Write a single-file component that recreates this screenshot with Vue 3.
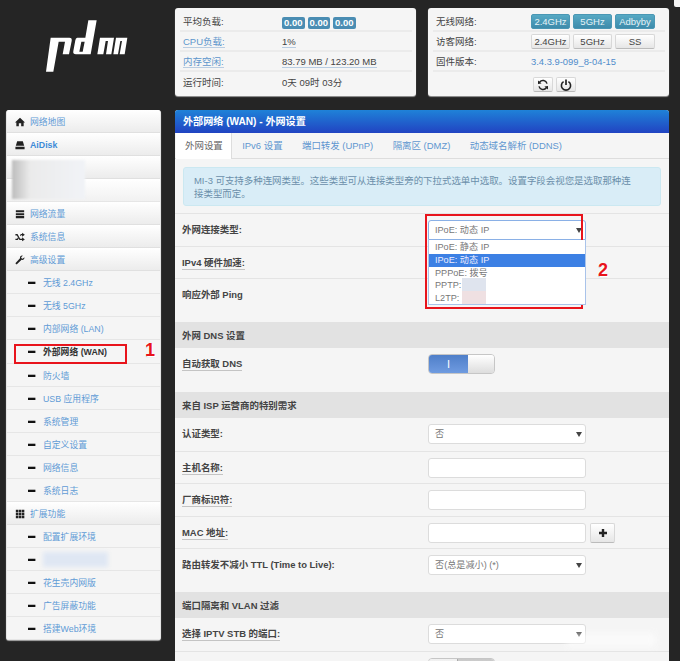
<script setup>
const nav = [
  { t: '网络地图', icon: 'home', top: true },
  { t: 'AiDisk', icon: 'hdd', top: true, bold: true },
  { t: '', top: true, empty: true },
  { t: '', plain: true, empty: true },
  { t: '网络流量', icon: 'tasks', top: true },
  { t: '系统信息', icon: 'random', top: true },
  { t: '高级设置', icon: 'wrench', top: true },
  { t: '无线 2.4GHz' },
  { t: '无线 5GHz' },
  { t: '内部网络 (LAN)' },
  { t: '外部网络 (WAN)', active: true },
  { t: '防火墙' },
  { t: 'USB 应用程序' },
  { t: '系统管理' },
  { t: '自定义设置' },
  { t: '网络信息' },
  { t: '系统日志' },
  { t: '扩展功能', icon: 'th', top: true },
  { t: '配置扩展环境' },
  { t: '', blur: true },
  { t: '花生壳内网版' },
  { t: '广告屏蔽功能' },
  { t: '搭建Web环境' }
]
const tabs = ['外网设置', 'IPv6 设置', '端口转发 (UPnP)', '隔离区 (DMZ)', '动态域名解析 (DDNS)']
const icons = {
  home: 'M6 1 L12 6.5 L10.4 6.5 L10.4 11 L7.4 11 L7.4 7.6 L4.6 7.6 L4.6 11 L1.6 11 L1.6 6.5 L0 6.5 Z',
  hdd: 'M2.6 1.5 H9.4 L11 7 H1 Z M0.5 8 H11.5 V11.2 H0.5 Z',
  tasks: 'M1 1.5 H11 V4 H1 Z M1 5 H11 V7.5 H1 Z M1 8.5 H11 V11 H1 Z',
  random: 'M0.5 2.5 H3 L6.2 8 H8.5 V6.4 L11.8 8.9 L8.5 11.2 V9.6 H5.4 L2.2 4.1 H0.5 Z M0.5 8 H2.5 L3.4 6.5 L4.3 8 L3.3 9.6 H0.5 Z M6 3.8 L7 2.5 H8.5 V0.8 L11.8 3.3 L8.5 5.6 V4 H7.3 L6.7 5 Z',
  wrench: 'M11.2 2.6 L9.3 4.4 L7.8 4 L7.4 2.6 L9.3 0.8 C7.6 0.2 5.6 1.5 6 3.9 L1 9.2 C0 10.2 1.6 11.8 2.6 10.8 L7.9 5.8 C10.2 6.4 11.8 4.4 11.2 2.6 Z',
  th: 'M1 1 H4 V4 H1 Z M4.6 1 H7.6 V4 H4.6 Z M8.2 1 H11.2 V4 H8.2 Z M1 4.6 H4 V7.6 H1 Z M4.6 4.6 H7.6 V7.6 H4.6 Z M8.2 4.6 H11.2 V7.6 H8.2 Z M1 8.2 H4 V11.2 H1 Z M4.6 8.2 H7.6 V11.2 H4.6 Z M8.2 8.2 H11.2 V11.2 H8.2 Z',
  minus: 'M0 4.7 H7.4 V7 H0 Z'
}
</script>

<template>
  <div class="page">
    <aside class="left">
      <div class="logo-box">
        <svg class="logo" width="95" height="62" viewBox="0 0 285 186" aria-label="logo">
          <path fill="#fff" d="M32 68 H88 Q97 68 95 78 L87 118 H68 L75 80 H56 L40 170 H18 Z" />
          <path fill="#fff" fill-rule="evenodd" d="M108 68 H136 L145 16 H170 L152 118 H108 Q98 118 100 108 L106 76 Q107 68 112 68 Z M124 80 L118 110 H128 L134 80 Z" />
          <path fill="#fff" d="M180 68 H222 L214 118 H198 L204 78 H197 L190 118 H172 Z" />
          <path fill="#fff" d="M228 68 H262 L254 118 H239 L246 78 H241 L234 118 H220 Z" />
        </svg>
      </div>
      <nav class="side">
        <div
          v-for="(n, i) in nav"
          :key="i"
          class="nav-row"
          :class="{ top: n.top, active: n.active, bold: n.bold, plain: n.plain }"
        >
          <svg v-if="n.icon" class="ic" width="10" height="10" viewBox="0 0 12 12"><path :d="icons[n.icon]" fill="#222" /></svg>
          <svg v-else-if="!n.top && !n.plain" class="dash" width="8" height="12" viewBox="0 0 8 12"><path :d="icons.minus" fill="#111" /></svg>
          <span v-if="n.blur" class="blur-text"></span>
          <span v-else class="nav-text">{{ n.t }}</span>
        </div>
        <div class="blur-box"></div>
      </nav>
    </aside>

    <main class="right">
      <div class="status">
        <section class="card">
          <div class="s-row">
            <span class="k">平均负载:</span>
            <span class="v badges"><b>0.00</b><b>0.00</b><b>0.00</b></span>
          </div>
          <div class="s-row">
            <span class="k link"><u>CPU负载:</u></span>
            <span class="v"><u>1%</u></span>
          </div>
          <div class="s-row">
            <span class="k link"><u>内存空闲:</u></span>
            <span class="v"><u>83.79 MB / 123.20 MB</u></span>
          </div>
          <div class="s-row">
            <span class="k">运行时间:</span>
            <span class="v">0天 09时 03分</span>
          </div>
        </section>
        <section class="card card-r">
          <div class="s-row">
            <span class="k">无线网络:</span>
            <span class="btns"><button class="on">2.4GHz</button><button class="on">5GHz</button><button class="on wide">Adbyby</button></span>
          </div>
          <div class="s-row">
            <span class="k">访客网络:</span>
            <span class="btns"><button>2.4GHz</button><button>5GHz</button><button class="wide">SS</button></span>
          </div>
          <div class="s-row">
            <span class="k">固件版本:</span>
            <span class="fw">3.4.3.9-099_8-04-15</span>
          </div>
          <div class="s-row no-line">
            <span class="k"></span>
            <span class="icons">
              <button class="ib" aria-label="刷新">
                <svg width="12" height="12" viewBox="0 0 12 12"><path d="M10 4.6 A4.2 4.2 0 0 0 2.6 3.2 M2 7.4 A4.2 4.2 0 0 0 9.4 8.8" fill="none" stroke="#222" stroke-width="1.5" /><path d="M1 1.6 L4.6 4.6 L1 5 Z M11 10.4 L7.4 7.4 L11 7 Z" fill="#222" /></svg>
              </button>
              <button class="ib" aria-label="电源">
                <svg width="12" height="12" viewBox="0 0 12 12"><path d="M3.6 2.6 A4.6 4.6 0 1 0 8.4 2.6" fill="none" stroke="#222" stroke-width="1.6" /><path d="M6 0.5 V6" stroke="#222" stroke-width="1.7" /></svg>
              </button>
            </span>
          </div>
        </section>
      </div>

      <section class="panel">
        <header class="head">外部网络 (WAN) - 外网设置</header>
        <div class="tabs">
          <span v-for="(t, i) in tabs" :key="t" class="tab" :class="{ current: i === 0 }">{{ t }}</span>
        </div>
        <div class="alert">MI-3 可支持多种连网类型。这些类型可从连接类型旁的下拉式选单中选取。设置字段会视您是选取那种连接类型而定。</div>

        <div class="form">
          <div class="row first">
            <label>外网连接类型:</label>
            <div class="ctl">
              <div class="sel focus">IPoE: 动态 IP<i></i></div>
              <ul class="drop">
                <li>IPoE: 静态 IP</li>
                <li class="hl">IPoE: 动态 IP</li>
                <li>PPPoE: 拨号</li>
                <li>PPTP:<span class="smudge"></span></li>
                <li>L2TP:<span class="smudge pink"></span></li>
              </ul>
            </div>
          </div>
          <div class="row"><label><span class="dotted">IPv4 硬件加速:</span></label></div>
          <div class="row tall"><label>响应外部 Ping</label></div>
          <div class="sec">外网 DNS 设置</div>
          <div class="row tall">
            <label><span class="dotted">自动获取 DNS</span></label>
            <div class="ctl"><div class="toggle"><span class="t-on">I</span><span class="t-off"></span></div></div>
          </div>
          <div class="sec">来自 ISP 运营商的特别需求</div>
          <div class="row">
            <label>认证类型:</label>
            <div class="ctl"><div class="sel">否<i></i></div></div>
          </div>
          <div class="row">
            <label><span class="dotted">主机名称:</span></label>
            <div class="ctl"><div class="inp"></div></div>
          </div>
          <div class="row">
            <label><span class="dotted">厂商标识符:</span></label>
            <div class="ctl"><div class="inp"></div></div>
          </div>
          <div class="row">
            <label><span class="dotted">MAC 地址:</span></label>
            <div class="ctl mac">
              <div class="inp"></div>
              <button class="ib plus" aria-label="添加">
                <svg width="10" height="10" viewBox="0 0 10 10"><path d="M3.8 1 H6.2 V3.8 H9 V6.2 H6.2 V9 H3.8 V6.2 H1 V3.8 H3.8 Z" fill="#222" /></svg>
              </button>
            </div>
          </div>
          <div class="row tall">
            <label>路由转发不减小 TTL (Time to Live):</label>
            <div class="ctl"><div class="sel">否(总是减小) (*)<i></i></div></div>
          </div>
          <div class="sec">端口隔离和 VLAN 过滤</div>
          <div class="row">
            <label><span class="dotted">选择 IPTV STB 的端口:</span></label>
            <div class="ctl"><div class="sel">否<i></i></div></div>
          </div>
          <div class="row">
            <label></label>
            <div class="ctl"><div class="toggle off"><span class="t-a"></span><span class="t-b"></span></div></div>
          </div>
        </div>
      </section>
    </main>

    <div class="mark box-a"></div>
    <div class="mark box-b"></div>
    <span class="num n1">1</span>
    <span class="num n2">2</span>
    <div class="corner"></div>
    <div class="watermark"></div>
  </div>
</template>

<style>
html, body { margin: 0; height: 661px; overflow: hidden; background: #252525; }
</style>

<style scoped>
* { box-sizing: border-box; }
.page {
  position: relative;
  width: 680px;
  height: 661px;
  overflow: hidden;
  background: #252525;
  display: flex;
  gap: 14px;
  padding: 8px 0 0 6px;
  font: 8.8px/20px "Liberation Sans", "Noto Sans CJK SC", sans-serif;
  color: #444;
}
.left { width: 155px; flex: none; }
.logo-box { height: 102px; padding: 7px 0 0 34px; }
.logo { display: block; }

.side {
  position: relative;
  height: 530px;
  display: flex;
  flex-direction: column;
  background: #f5f5f5;
  border: solid #e4e4e4;
  border-width: 0 1px;
  border-radius: 3px;
  overflow: hidden;
  box-shadow: 0 1px 1px #aaa;
}
.nav-row {
  flex: 1 1 0;
  min-height: 0;
  display: flex;
  align-items: center;
  padding: 2px 0 0 21px;
  background: #f5f5f5;
  border-bottom: 1px solid #e6e6e6;
  color: #5f9bd6;
}
.nav-row.top {
  padding-left: 8px;
  background: linear-gradient(#fff, #ececec);
  border-bottom-color: #e0e0e0;
}
.nav-row.plain { background: linear-gradient(#fff, #f1f1f1); }
.nav-row.bold .nav-text { font-weight: 700; color: #3d8bd8; }
.nav-row.active { color: #333; font-weight: 700; }
.ic { margin-right: 5px; flex: none; }
.dash { margin-right: 7px; flex: none; }
.blur-text { width: 65px; height: 15px; background: #dfe7f3; filter: blur(2px); }
.blur-box {
  position: absolute;
  left: 5px;
  top: 50px;
  width: 73px;
  height: 39px;
  background: linear-gradient(90deg, #bdbdbd, #ebebeb 25%, #f1f3f7);
  filter: blur(1px);
}

.right { width: 494px; flex: none; }
.status { display: flex; gap: 12px; height: 88px; margin-bottom: 14px; font-size: 9.5px; }
.card {
  flex: 1;
  background: #f5f5f5;
  border-radius: 3px;
  padding: 4px 4px 0 5px;
  box-shadow: 0 1px 1px #999;
}
.s-row {
  display: flex;
  height: 20px;
  line-height: 19px;
  border-bottom: 2px solid #ebebeb;
  padding: 1px 0 0 3px;
  align-items: center;
}
.s-row:last-child { border-bottom: 0; }
.no-line { border-bottom: 0; }
.k { width: 99px; flex: none; }
.link, .link u { color: #5d95cc; }
u { text-decoration: none; border-bottom: 1px solid #b9cde2; }
.badges { display: flex; gap: 3px; margin-top: 2px; }
.badges b {
  width: 22.5px;
  height: 12px;
  line-height: 12px;
  background: #4a8db3;
  color: #fff;
  text-align: center;
  border-radius: 2px;
}
.card-r .k { width: 95px; }
.btns { display: flex; gap: 3px; margin-top: -1px; }
button {
  font: inherit;
  margin: 0;
  padding: 0;
  height: 15px;
  width: 39px;
  line-height: 14px;
  color: #444;
  background: linear-gradient(#fff, #e6e6e6);
  border: 1px solid #d8d8d8;
  border-bottom-color: #bbb;
  border-radius: 2px;
}
button.wide { width: 40px; }
button.on {
  color: #e6f3f7;
  background: linear-gradient(#56a9c4, #3e8bab);
  border-color: #4a97b4;
}
.fw { color: #4f8ccb; font-size: 9.4px; }
.icons { display: flex; gap: 3px; padding: 4px 0 0 2px; }
.ib {
  width: 20px;
  height: 15px;
  display: flex;
  align-items: center;
  justify-content: center;
}

.panel {
  height: 600px;
  background: #f5f5f5;
  border-radius: 3px 3px 0 0;
  overflow: hidden;
  font-size: 9.45px;
}
.head {
  height: 23px;
  line-height: 23px;
  padding-left: 8px;
  color: #fff;
  font-size: 10.1px;
  font-weight: 700;
  background: linear-gradient(#1f82d8, #2143c2);
}
.tabs {
  height: 26px;
  display: flex;
  padding-left: 1px;
  border-bottom: 1px solid #ddd;
  color: #5f97d0;
}
.tab { line-height: 26px; padding: 0 9.7px; white-space: nowrap; }
.tab.current {
  background: #fff;
  color: #666;
  border-right: 1px solid #ddd;
  height: 26px;
  width: 56px;
  padding: 0 9px;
  margin-right: 0.5px;
}
.alert {
  margin: 8px 8px 7px;
  height: 39px;
  padding: 6px 28px 6px 10px;
  line-height: 13px;
  background: #d9edf7;
  border: 1px solid #cbe8f1;
  border-radius: 3px;
  color: #6b8faa;
}
.form { position: relative; }
.row {
  position: relative;
  display: flex;
  height: 32.5px;
  padding: 6px 0 0 7px;
  border-top: 1px solid #e4e4e4;
}
.row.tall { height: 44px; }
.sec + .row, .sec { border-top: 0; }
label {
  width: 245px;
  flex: none;
  height: 20px;
  font-weight: 700;
  color: #444;
  align-self: flex-start;
}
.dotted { border-bottom: 1px solid #c4c4c4; padding-bottom: 1px; }
.ctl { position: absolute; left: 253px; top: 6px; width: 159px; font-size: 9.15px; }
.sel, .inp {
  position: relative;
  width: 158px;
  height: 20px;
  background: #fff;
  border: 1px solid #dcdcdc;
  border-radius: 3px;
  padding-left: 6px;
  line-height: 19px;
  color: #777;
}
.sel i {
  position: absolute;
  right: 3px;
  top: 7px;
  border: 3px solid transparent;
  border-top: 5px solid #444;
  border-bottom: 0;
}
.sel.focus { border-color: #8ab0e6; border-radius: 3px 3px 0 0; }
.drop {
  position: absolute;
  z-index: 2;
  left: 0;
  top: 20px;
  width: 158px;
  height: 65px;
  margin: 0;
  padding: 1px 0 0;
  list-style: none;
  background: #fff;
  border: 1px solid #a9c3ea;
  border-top: 0;
  color: #777;
}
.drop li { height: 12.8px; line-height: 13px; padding-left: 6px; position: relative; }
.drop li.hl { background: #3c80e4; color: #eef; }
.smudge {
  position: absolute;
  left: 33px;
  top: -1px;
  width: 24px;
  height: 13px;
  background: #dfe4ee;
}
.smudge.pink { background: #efe0e2; }
.toggle {
  display: flex;
  width: 67px;
  height: 20px;
  border: 1px solid #c6c6c6;
  border-radius: 4px;
  overflow: hidden;
}
.t-on {
  width: 39px;
  background: linear-gradient(#4f7fc9, #6f9be0);
  color: #fff;
  text-align: center;
  line-height: 18px;
  font-size: 11px;
}
.t-off { flex: 1; background: linear-gradient(#fff, #ddd); }
.t-a { width: 29px; background: linear-gradient(#f2f2f2, #e0e0e0); border-right: 1px solid #aaa; }
.t-b { flex: 1; background: linear-gradient(#c9c9c9, #e0e0e0); }
.sec {
  height: 26px;
  line-height: 27px;
  padding-left: 7px;
  background: #e2e2e2;
  font-weight: 700;
  color: #444;
}
.mac { width: 200px; display: flex; gap: 4px; align-items: flex-start; }
.plus { width: 25px; height: 20px; flex: none; }

.mark { position: absolute; border: 2px solid #e8141c; pointer-events: none; }
.box-a { left: 14px; top: 344px; width: 113px; height: 20px; }
.box-b { left: 425px; top: 214px; width: 158px; height: 95px; }
.num {
  position: absolute;
  color: #e8141c;
  font: 700 18px/20px "Liberation Sans", sans-serif;
  text-shadow: 1px 1px 0 #fff, -1px 0 0 #fff, 0 1px 1px #bbb;
}
.n1 { left: 145px; top: 340px; }
.n2 { left: 598px; top: 260px; }
.corner { position: absolute; right: 0; top: 0; width: 6px; height: 7px; background: #f4f4f4; border-radius: 0 0 0 2px; }
.watermark {
  position: absolute;
  left: 566px;
  top: 633px;
  width: 90px;
  height: 14px;
  background: #fff;
  opacity: 0.55;
  filter: blur(3px);
}
</style>
